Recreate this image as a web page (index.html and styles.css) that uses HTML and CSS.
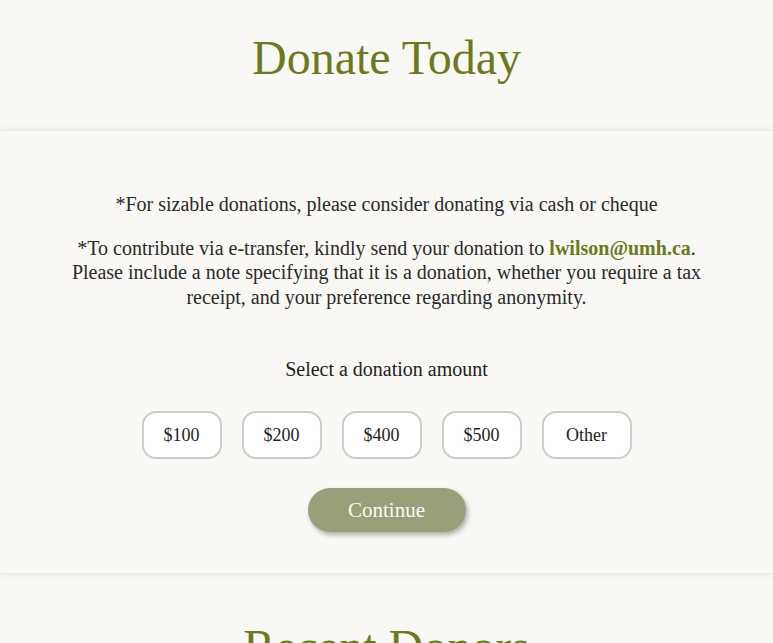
FILE: index.html
```html
<!DOCTYPE html>
<html lang="en">
<head>
<meta charset="utf-8">
<title>Donate Today</title>
<link rel="stylesheet" href="styles.css">
</head>
<body>
<header class="hero">
  <h1 class="title">Donate Today</h1>
</header>
<section class="card">
  <p class="note">*For sizable donations, please consider donating via cash or cheque</p>
  <p class="note note-second">*To contribute via e-transfer, kindly send your donation to <a class="email" href="#">lwilson@umh.ca</a>.<br>Please include a note specifying that it is a donation, whether you require a tax receipt, and your preference regarding anonymity.</p>
  <p class="select-label">Select a donation amount</p>
  <div class="amounts">
    <button class="amount">$100</button>
    <button class="amount">$200</button>
    <button class="amount">$400</button>
    <button class="amount">$500</button>
    <button class="amount amount-other">Other</button>
  </div>
  <button class="continue">Continue</button>
</section>
<section class="recent">
  <h2 class="title">Recent Donors</h2>
</section>
</body>
</html>
```

FILE: styles.css
```css
html, body {
  margin: 0;
  padding: 0;
  background: #f9f8f4;
}
body {
  font-family: "Liberation Serif", serif;
  color: #222;
}
.hero {
  padding: 31px 0 46px;
  text-align: center;
}
.title {
  margin: 0;
  font-family: "Liberation Serif", serif;
  font-weight: normal;
  font-size: 48px;
  line-height: 54px;
  color: #6b7a1f;
  text-align: center;
}
.card {
  background: #f9f8f4;
  box-shadow: 0 0 7px rgba(0, 0, 0, 0.13);
  padding: 61px 0 41px;
  display: flex;
  flex-direction: column;
  align-items: center;
}
.note {
  margin: 0;
  max-width: 660px;
  font-size: 20px;
  line-height: 24.5px;
  text-align: center;
  color: #2a2a2a;
}
.note-second {
  margin-top: 19px;
}
.email {
  color: #6b7a1f;
  font-weight: bold;
  text-decoration: none;
}
.select-label {
  margin: 48px 0 0;
  font-size: 20px;
  line-height: 24px;
  color: #1e1e1e;
}
.amounts {
  margin-top: 30px;
  display: flex;
  gap: 20px;
}
.amount {
  width: 80px;
  height: 48px;
  background: #fff;
  border: 2px solid #cdcdcd;
  border-radius: 14px;
  font-family: "Liberation Serif", serif;
  font-size: 18px;
  color: #1e1e1e;
  padding: 0;
}
.amount-other {
  width: 90px;
}
.continue {
  margin-top: 29px;
  width: 158px;
  height: 44px;
  border: none;
  border-radius: 22px;
  background: #9a9f7a;
  color: #fbfbf5;
  font-family: "Liberation Serif", serif;
  font-size: 21px;
  box-shadow: 2px 3px 5px rgba(0, 0, 0, 0.3);
}
.recent {
  padding: 47px 0 60px;
}
```
